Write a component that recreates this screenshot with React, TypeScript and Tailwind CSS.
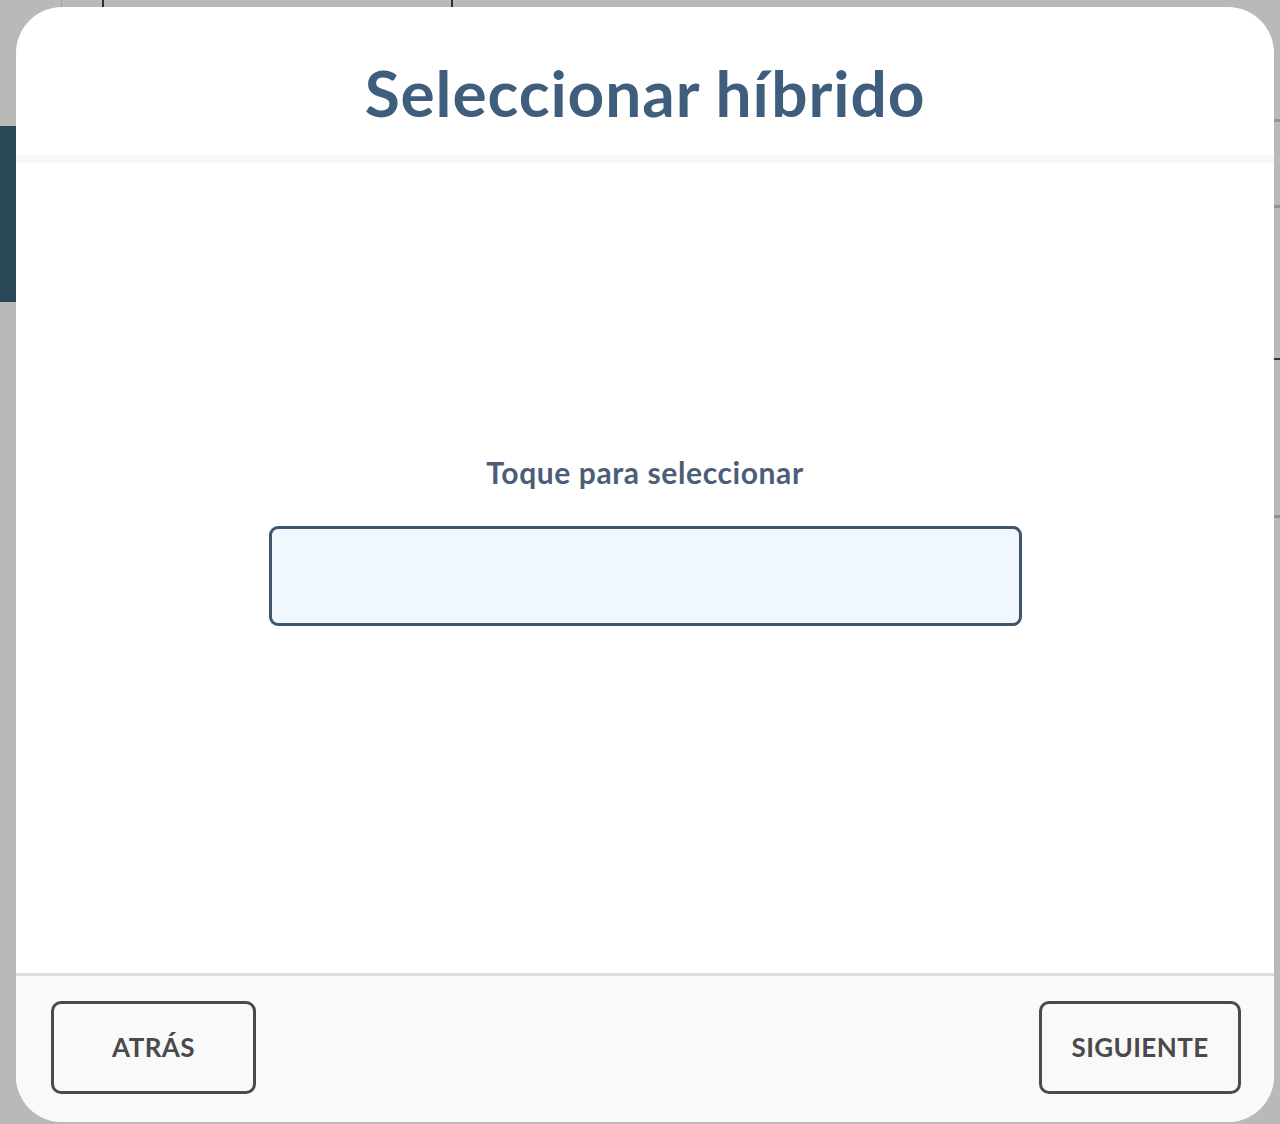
import React from "react";

export default function App() {
  const font = { fontFamily: "Lato, 'Open Sans', sans-serif" };
  return (
    <div className="flex h-[1124px] w-[1280px] overflow-hidden bg-[#b8bab7]" style={font}>
      {/* left strip of underlying app */}
      <div className="flex w-[16px] shrink-0 flex-col">
        <div className="mt-[126px] h-[176px] bg-[#2b4859]" />
      </div>
      {/* middle */}
      <div className="flex w-[1258px] shrink-0 flex-col">
        <div className="flex h-[7px] shrink-0">
          <div className="ml-[45px] w-[1px] bg-[#9ea3a3]" />
          <div className="ml-[40px] w-[2px] bg-[#1f3140]" />
          <div className="ml-[347px] w-[2px] bg-[#1f3140]" />
        </div>
        <div className="flex h-[1115px] flex-col overflow-hidden rounded-[46px] bg-white">
          <div className="flex h-[148px] shrink-0 items-center justify-center pt-[24px]">
            <h1 className="text-[64px] font-bold leading-none tracking-[0.9px] text-[#3f5d7c]">
              Seleccionar híbrido
            </h1>
          </div>
          <div className="h-[8px] shrink-0 bg-[#f8f8f8]" />
          <div className="flex flex-1 flex-col items-center pt-[294px]">
            <p className="text-[30px] font-bold leading-none tracking-[0.6px] text-[#4d5d78]">
              Toque para seleccionar
            </p>
            <div className="mt-[39px] h-[100px] w-[753px] rounded-[9px] border-[3px] border-[#3f5670] bg-[#f0f7fd]" />
          </div>
          <div className="flex h-[149px] shrink-0 items-start justify-between border-t-[3px] border-[#dedede] bg-[#f9f9f9] pl-[35px] pr-[33px] pt-[25px]">
            <button className="flex h-[93px] w-[205px] items-center justify-center rounded-[10px] border-[3px] border-[#4a4a4a] text-[26px] font-bold tracking-[0.4px] text-[#4a4a4a]">
              ATRÁS
            </button>
            <button className="flex h-[93px] w-[202px] items-center justify-center rounded-[10px] border-[3px] border-[#4a4a4a] text-[26px] font-bold tracking-[0.4px] text-[#4a4a4a]">
              SIGUIENTE
            </button>
          </div>
        </div>
      </div>
      {/* right strip */}
      <div className="flex w-[6px] shrink-0 flex-col">
        <div className="mt-[119px] h-[3px] bg-[#8e9394]" />
        <div className="mt-[83px] h-[3px] bg-[#8e9394]" />
        <div className="mt-[150px] h-[2px] bg-[#253540]" />
        <div className="mt-[155px] h-[3px] bg-[#8e9394]" />
      </div>
    </div>
  );
}
